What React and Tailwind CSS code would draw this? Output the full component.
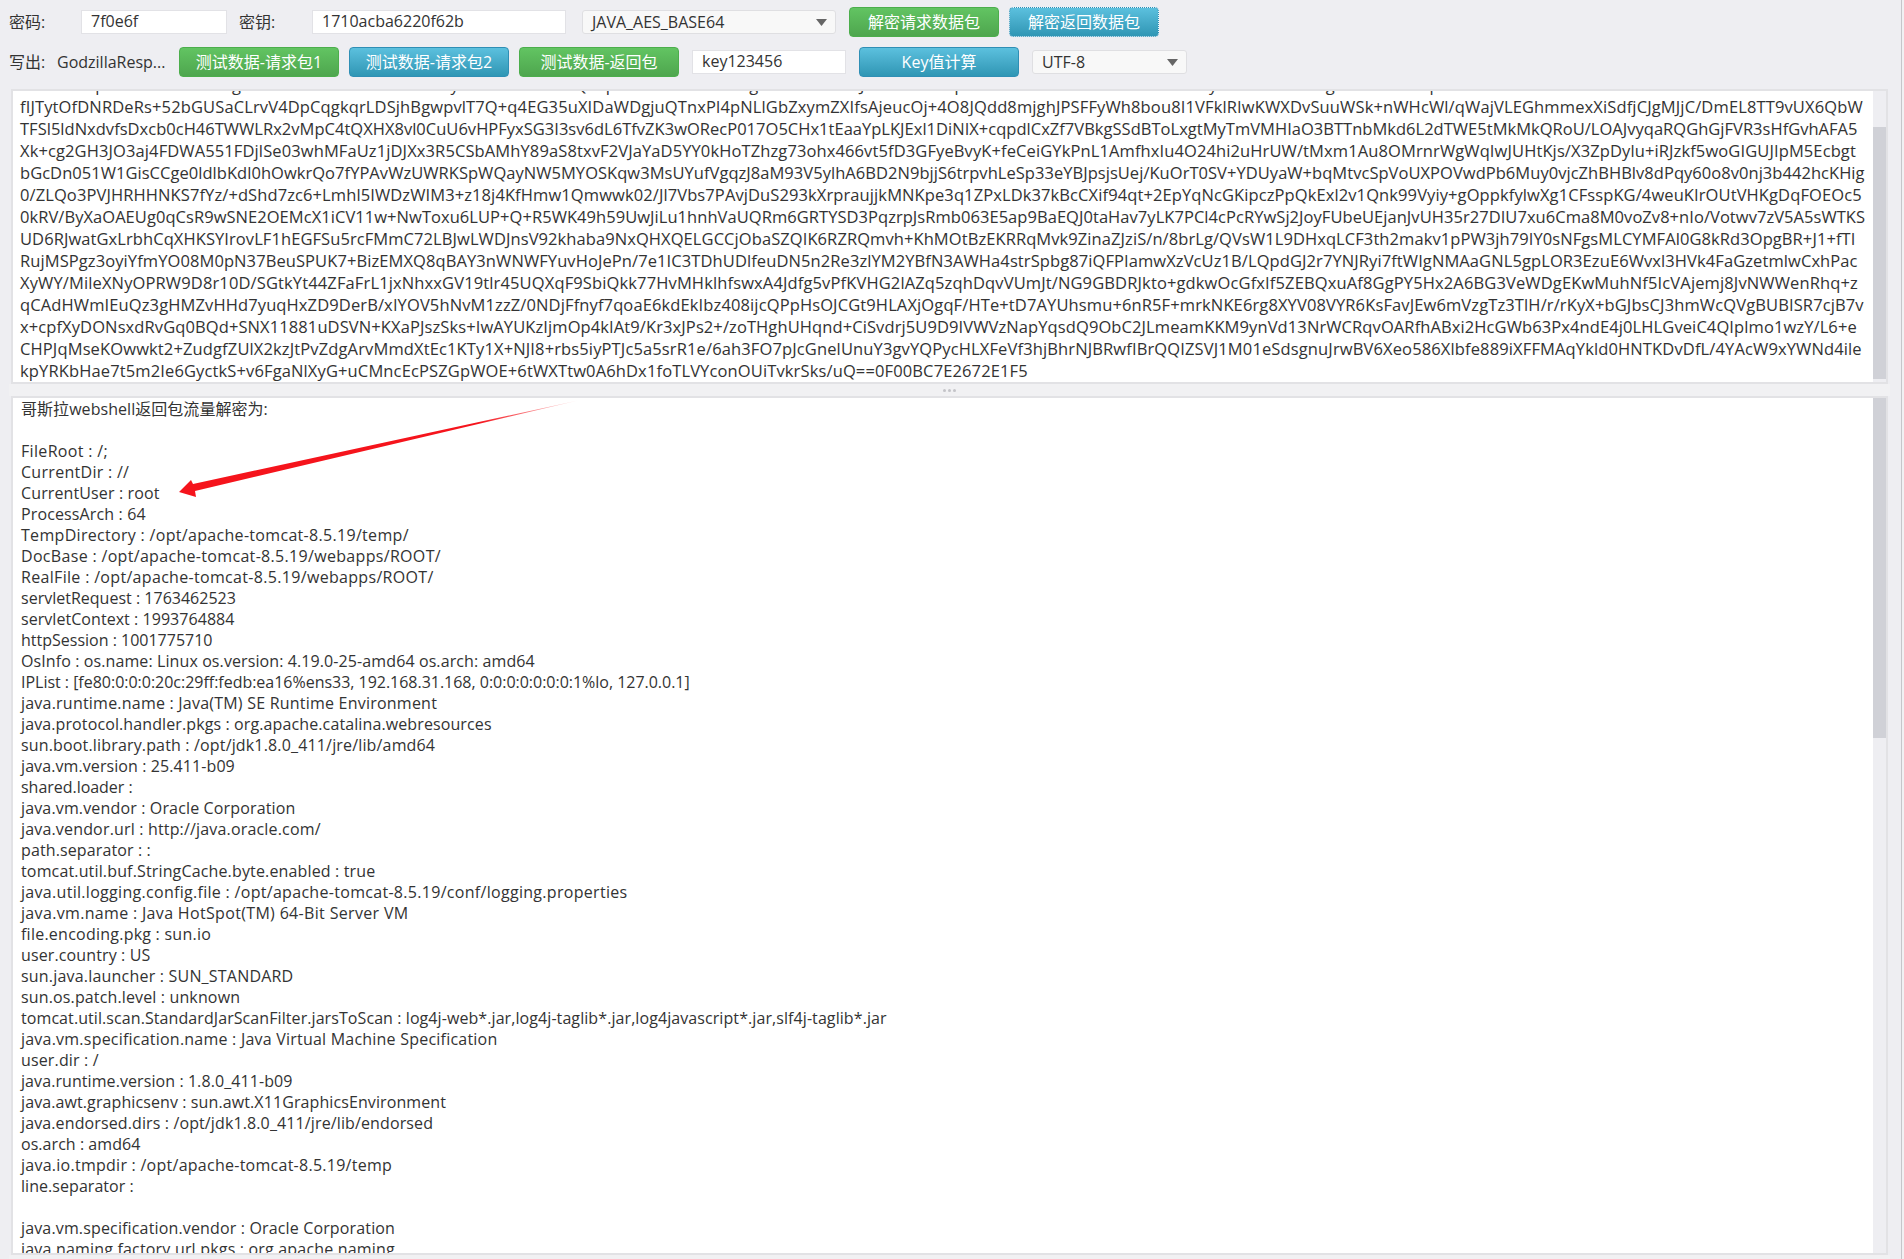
const upperLines = [
  ['aNdRt5LxpE2kOwTmHa8ZcgUe7BiVoX4sKnIrbM1fDuG3yWl0hTeSvAcN6QzRpiL9dOtmEk2FaUxgYb7CnHs4WrJ1oVe3BlKdq5ZfMuT8iXaPt0GhSnEc6RwOb2LyDk9AmIv7Us1gNfHz4ExTo3pRaWb', 'tracking-[0.1px]'],
  ['fIJTytOfDNRDeRs+52bGUSaCLrvV4DpCqgkqrLDSjhBgwpvlT7Q+q4EG35uXIDaWDgjuQTnxPl4pNLlGbZxymZXIfsAjeucOj+4O8JQdd8mjghJPSFFyWh8bou8I1VFklRIwKWXDvSuuWSk+nWHcWl/qWajVLEGhmmexXiSdfjCJgMJjC/DmEL8TT9vUX6QbW', 'tracking-[0.13px]'],
  ['TFSl5ldNxdvfsDxcb0cH46TWWLRx2vMpC4tQXHX8vl0CuU6vHPFyxSG3I3sv6dL6TfvZK3wORecP017O5CHx1tEaaYpLKJExl1DiNIX+cqpdlCxZf7VBkgSSdBToLxgtMyTmVMHIaO3BTTnbMkd6L2dTWE5tMkMkQRoU/LOAJvyqaRQGhGjFVR3sHfGvhAFA5', 'tracking-[0.02px]'],
  ['Xk+cg2GH3JO3aj4FDWA551FDjlSe03whMFaUz1jDJXx3R5CSbAMhY89aS8txvF2VJaYaD5YY0kHoTZhzg73ohx466vt5fD3GFyeBvyK+feCeiGYkPnL1AmfhxIu4O24hi2uHrUW/tMxm1Au8OMrnrWgWqIwJUHtKjs/X3ZpDylu+iRJzkf5woGIGUJIpM5Ecbgt', 'tracking-[0.11px]'],
  ['bGcDn051W1GisCCge0ldlbKdl0hOwkrQo7fYPAvWzUWRKSpWQayNW5MYOSKqw3MsUYufVgqzJ8aM93V5ylhA6BD2N9bjjS6trpvhLeSp33eYBJpsjsUej/KuOrT0SV+YDUyaW+bqMtvcSpVoUXPOVwdPb6Muy0vjcZhBHBlv8dPqy60o8v0nj3b442hcKHig', 'tracking-[0.04px]'],
  ['0/ZLQo3PVJHRHHNKS7fYz/+dShd7zc6+Lmhl5IWDzWIM3+z18j4KfHmw1Qmwwk02/Jl7Vbs7PAvjDuS293kXrpraujjkMNKpe3q1ZPxLDk37kBcCXif94qt+2EpYqNcGKipczPpQkExl2v1Qnk99Vyiy+gOppkfylwXg1CFsspKG/4weuKIrOUtVHKgDqFOEOc5', 'tracking-[0.1px]'],
  ['0kRV/ByXaOAEUg0qCsR9wSNE2OEMcX1iCV11w+NwToxu6LUP+Q+R5WK49h59UwJiLu1hnhVaUQRm6GRTYSD3PqzrpJsRmb063E5ap9BaEQJ0taHav7yLK7PCl4cPcRYwSj2JoyFUbeUEjanJvUH35r27DIU7xu6Cma8M0voZv8+nIo/Votwv7zV5A5sWTKS', 'tracking-[0.05px]'],
  ['UD6RJwatGxLrbhCqXHKSYIrovLF1hEGFSu5rcFMmC72LBJwLWDJnsV92khaba9NxQHXQELGCCjObaSZQIK6RZRQmvh+KhMOtBzEKRRqMvk9ZinaZJziS/n/8brLg/QVsW1L9DHxqLCF3th2makv1pPW3jh79IY0sNFgsMLCYMFAl0G8kRd3OpgBR+J1+fTI', 'tracking-[0.08px]'],
  ['RujMSPgz3oyiYfmYO08M0pN37BeuSPUK7+BizEMXQ8qBAY3nWNWFYuvHoJePn/7e1IC3TDhUDlfeuDN5n2Re3zlYM2YBfN3AWHa4strSpbg87iQFPIamwXzVcUz1B/LQpdGJ2r7YNJRyi7ftWIgNMAaGNL5gpLOR3EzuE6Wvxl3HVk4FaGzetmlwCxhPac', 'tracking-[0.09px]'],
  ['XyWY/MileXNyOPRW9D8r10D/SGtkYt44ZFaFrL1jxNhxxGV19tlr45UQXqF9SbiQkk77HvMHklhfswxA4Jdfg5vPfKVHG2lAZq5zqhDqvVUmJt/NG9GBDRJkto+gdkwOcGfxIf5ZEBQxuAf8GgPY5Hx2A6BG3VeWDgEKwMuhNf5IcVAjemj8JvNWWenRhq+z', 'tracking-[0.13px]'],
  ['qCAdHWmIEuQz3gHMZvHHd7yuqHxZD9DerB/xIYOV5hNvM1zzZ/0NDjFfnyf7qoaE6kdEkIbz408ijcQPpHsOJCGt9HLAXjOgqF/HTe+tD7AYUhsmu+6nR5F+mrkNKE6rg8XYV08VYR6KsFavJEw6mVzgTz3TlH/r/rKyX+bGJbsCJ3hmWcQVgBUBISR7cjB7v', 'tracking-[0.12px]'],
  ['x+cpfXyDONsxdRvGq0BQd+SNX11881uDSVN+KXaPJszSks+IwAYUKzIjmOp4kIAt9/Kr3xJPs2+/zoTHghUHqnd+CiSvdrj5U9D9IVWVzNapYqsdQ9ObC2JLmeamKKM9ynVd13NrWCRqvOARfhABxi2HcGWb63Px4ndE4j0LHLGveiC4QIplmo1wzY/L6+e', 'tracking-[0.1px]'],
  ['CHPJqMseKOwwkt2+ZudgfZUlX2kzJtPvZdgArvMmdXtEc1KTy1X+NJI8+rbs5iyPTJc5a5srR1e/6ah3FO7pJcGnelUnuY3gvYQPycHLXFeVf3hjBhrNJBRwfIBrQQIZSVJ1M01eSdsgnuJrwBV6Xeo586Xlbfe889iXFFMAqYkld0HNTKDvDfL/4YAcW9xYWNd4ile', 'tracking-[0.13px]'],
  ['kpYRKbHae7t5m2Ie6GyctkS+v6FgaNlXyG+uCMncEcPSZGpWOE+6tWXTtw0A6hDx1foTLVYconOUiTvkrSks/uQ==0F00BC7E2672E1F5', 'tracking-[0.13px]'],
];

// tracking per line, the stand-in font's glyphs aren't the same width as the original's
const lowerLines = [
  ['哥斯拉webshell返回包流量解密为:', 'tracking-[0.05px]'],
  ['', ''],
  ['FileRoot : /;', 'tracking-[0.33px]'],
  ['CurrentDir : //', 'tracking-[0.29px]'],
  ['CurrentUser : root', 'tracking-[0.12px]'],
  ['ProcessArch : 64', 'tracking-[0.13px]'],
  ['TempDirectory : /opt/apache-tomcat-8.5.19/temp/', 'tracking-[0.31px]'],
  ['DocBase : /opt/apache-tomcat-8.5.19/webapps/ROOT/', 'tracking-[0.32px]'],
  ['RealFile : /opt/apache-tomcat-8.5.19/webapps/ROOT/', 'tracking-[0.32px]'],
  ['servletRequest : 1763462523', 'tracking-[0.01px]'],
  ['servletContext : 1993764884', 'tracking-[0.05px]'],
  ['httpSession : 1001775710', 'tracking-[0px]'],
  ['OsInfo : os.name: Linux os.version: 4.19.0-25-amd64 os.arch: amd64', 'tracking-[0.1px]'],
  ['IPList : [fe80:0:0:0:20c:29ff:fedb:ea16%ens33, 192.168.31.168, 0:0:0:0:0:0:0:1%lo, 127.0.0.1]', 'tracking-[-0.02px]'],
  ['java.runtime.name : Java(TM) SE Runtime Environment', 'tracking-[0.22px]'],
  ['java.protocol.handler.pkgs : org.apache.catalina.webresources', 'tracking-[0.11px]'],
  ['sun.boot.library.path : /opt/jdk1.8.0_411/jre/lib/amd64', 'tracking-[0.16px]'],
  ['java.vm.version : 25.411-b09', 'tracking-[0.09px]'],
  ['shared.loader :', 'tracking-[-0.03px]'],
  ['java.vm.vendor : Oracle Corporation', 'tracking-[0.15px]'],
  ['java.vendor.url : http://java.oracle.com/', 'tracking-[0.17px]'],
  ['path.separator : :', 'tracking-[0.12px]'],
  ['tomcat.util.buf.StringCache.byte.enabled : true', 'tracking-[0.15px]'],
  ['java.util.logging.config.file : /opt/apache-tomcat-8.5.19/conf/logging.properties', 'tracking-[0.3px]'],
  ['java.vm.name : Java HotSpot(TM) 64-Bit Server VM', 'tracking-[0.33px]'],
  ['file.encoding.pkg : sun.io', 'tracking-[0.24px]'],
  ['user.country : US', 'tracking-[0.12px]'],
  ['sun.java.launcher : SUN_STANDARD', 'tracking-[0.2px]'],
  ['sun.os.patch.level : unknown', 'tracking-[0.14px]'],
  ['tomcat.util.scan.StandardJarScanFilter.jarsToScan : log4j-web*.jar,log4j-taglib*.jar,log4javascript*.jar,slf4j-taglib*.jar', 'tracking-[0.08px]'],
  ['java.vm.specification.name : Java Virtual Machine Specification', 'tracking-[0.22px]'],
  ['user.dir : /', 'tracking-[0.15px]'],
  ['java.runtime.version : 1.8.0_411-b09', 'tracking-[0.08px]'],
  ['java.awt.graphicsenv : sun.awt.X11GraphicsEnvironment', 'tracking-[0.1px]'],
  ['java.endorsed.dirs : /opt/jdk1.8.0_411/jre/lib/endorsed', 'tracking-[0.12px]'],
  ['os.arch : amd64', 'tracking-[0.05px]'],
  ['java.io.tmpdir : /opt/apache-tomcat-8.5.19/temp', 'tracking-[0.26px]'],
  ['line.separator :', 'tracking-[0.05px]'],
  ['', ''],
  ['java.vm.specification.vendor : Oracle Corporation', 'tracking-[0.15px]'],
  ['java.naming.factory.url.pkgs : org.apache.naming', 'tracking-[0.18px]'],
];

function GreenButton({ width, children }) {
  return (
    <button className={`${width} h-[30px] shrink-0 rounded-[4px] border border-[#4cae4c] bg-gradient-to-b from-[#62c462] to-[#4ea64e] text-white`}>
      {children}
    </button>
  );
}

function BlueButton({ width, focused, children }) {
  return (
    <button className={`${width} h-[30px] shrink-0 rounded-[4px] border border-[#2f8fb5] bg-gradient-to-b from-[#5bc0de] to-[#2f96b4] text-white ${focused ? 'outline-1 outline-dotted -outline-offset-1 outline-[#e6f6fb]' : ''}`}>
      {children}
    </button>
  );
}

function Field({ width, value }) {
  return (
    <div className={`${width} h-6 shrink-0 bg-white border border-[#e2e2e6] pl-[9px] leading-[21px] text-[#333]`}>
      {value}
    </div>
  );
}

function Select({ width, value }) {
  return (
    <div className={`${width} h-6 shrink-0 flex items-center justify-between rounded-[3px] bg-[#f8f8f8] border border-[#dfdfe2] pl-[9px] pr-[8px] text-[#333]`}>
      <span className="-mt-[1px]">{value}</span>
      <svg width="11" height="7" viewBox="0 0 11 7"><path d="M0 0h11L5.5 7z" fill="#666" /></svg>
    </div>
  );
}

export default function App() {
  return (
    <div className="w-[1904px] h-[1259px] overflow-hidden bg-[#f1f1f3]">
      <div className="w-[1902px] h-[1259px] bg-[#eeeef2] text-base text-[#333] font-['Open_Sans','Noto_Sans_CJK_SC',sans-serif] border-r border-r-[#c6c6ca]">
        {/* top toolbar */}
        <div className="h-11 flex items-center">
          <span className="w-[81px] pl-[9px] shrink-0">密码:</span>
          <Field width="w-[146px]" value="7f0e6f" />
          <span className="w-[85px] pl-3 shrink-0">密钥:</span>
          <Field width="w-[254px]" value="1710acba6220f62b" />
          <div className="w-4 shrink-0" />
          <Select width="w-[254px]" value="JAVA_AES_BASE64" />
          <div className="w-[13px] shrink-0" />
          <GreenButton width="w-[150px]">解密请求数据包</GreenButton>
          <div className="w-[10px] shrink-0" />
          <BlueButton width="w-[150px]" focused>解密返回数据包</BlueButton>
        </div>
        <div className="h-[30px] mt-[3px] flex items-center">
          <span className="w-[57px] pl-[9px] shrink-0">写出:</span>
          <span className="w-[122px] shrink-0 whitespace-nowrap">GodzillaResp...</span>
          <GreenButton width="w-40">测试数据-请求包1</GreenButton>
          <div className="w-[10px] shrink-0" />
          <BlueButton width="w-40">测试数据-请求包2</BlueButton>
          <div className="w-[10px] shrink-0" />
          <GreenButton width="w-40">测试数据-返回包</GreenButton>
          <div className="w-[13px] shrink-0" />
          <Field width="w-[154px]" value="key123456" />
          <div className="w-[13px] shrink-0" />
          <BlueButton width="w-40">Key值计算</BlueButton>
          <div className="w-[13px] shrink-0" />
          <Select width="w-[155px]" value="UTF-8" />
        </div>

        {/* request text */}
        <div className="mt-3 ml-[11px] w-[1877px] h-[295px] flex bg-white border-2 border-[#e2e2e5] overflow-hidden">
          <div className="flex-1 min-w-0 pl-[7px] -mt-[17px] text-[16.5px] whitespace-nowrap overflow-hidden">
            {upperLines.map(([line, spacing], i) => <div key={i} className={`h-[22px] leading-[22px] ${spacing}`}>{line}</div>)}
          </div>
          <div className="w-[13px] shrink-0 flex flex-col bg-[#eeeef2]">
            <div className="h-9 shrink-0" />
            <div className="flex-1 bg-[#d0d1d7]" />
            <div className="h-[3px] shrink-0" />
          </div>
        </div>

        {/* splitter */}
        <div className="ml-[9px] w-[1881px] h-3 flex items-center justify-center gap-[2px] bg-[#f1f1f3]">
          <span className="w-[3px] h-[3px] rounded-full bg-[#c4c4c8]" />
          <span className="w-[3px] h-[3px] rounded-full bg-[#c4c4c8]" />
          <span className="w-[3px] h-[3px] rounded-full bg-[#c4c4c8]" />
        </div>

        {/* response text */}
        <div className="relative ml-[11px] w-[1877px] h-[859px] flex bg-white border-2 border-[#e2e2e5] overflow-hidden">
          <div className="flex-1 min-w-0 pl-2 pt-[1px] whitespace-nowrap overflow-hidden">
            {lowerLines.map(([line, spacing], i) => <div key={i} className={`h-[21px] leading-[21px] ${spacing}`}>{line}</div>)}
          </div>
          <div className="w-[13px] shrink-0 flex flex-col bg-[#eeeef2]">
            <div className="h-[340px] shrink-0 bg-[#d0d1d7]" />
          </div>
          <svg className="absolute left-[-13px] top-[-398px] pointer-events-none" width="600" height="900" viewBox="0 0 600 900">
            <defs>
              <linearGradient id="arrowFade" gradientUnits="userSpaceOnUse" x1="179" y1="492" x2="578" y2="401">
                <stop offset="0" stopColor="#f5141c" />
                <stop offset="0.75" stopColor="#f5141c" />
                <stop offset="1" stopColor="#f5141c" stopOpacity="0.15" />
              </linearGradient>
            </defs>
            <path d="M179 492 L191 480 L193 484 L578 400.5 L195 491 L196 497 Z" fill="url(#arrowFade)" />
          </svg>
        </div>
        <div className="ml-[9px] w-[1881px] h-1 bg-[#f1f1f3]" />
      </div>
    </div>
  );
}
